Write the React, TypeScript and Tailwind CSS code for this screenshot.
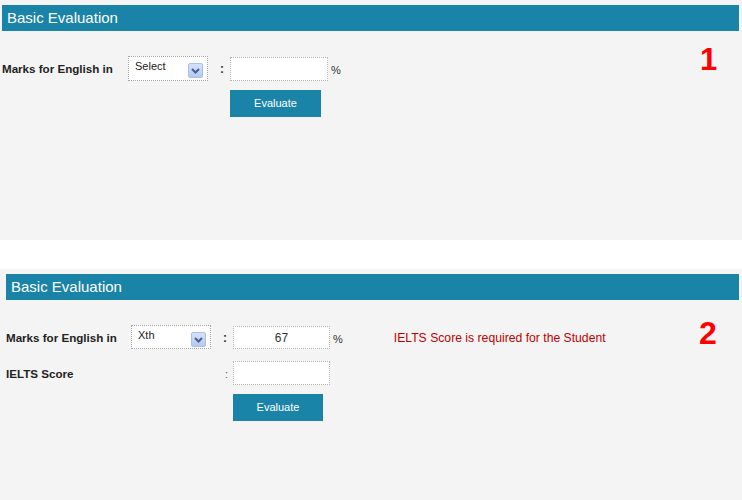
import React from "react";

const font = { fontFamily: '"Liberation Sans", Arial, sans-serif' };

function Arrow() {
  return (
    <span className="flex h-[15px] w-[15px] items-center justify-center rounded-[2px] border border-[#a9c0ec] bg-gradient-to-b from-[#d5e2fb] to-[#b3c9f3]">
      <svg width="9" height="6" viewBox="0 0 9 6">
        <path d="M1 1 L4.5 4.5 L8 1" fill="none" stroke="#4a5f8a" strokeWidth="2" />
      </svg>
    </span>
  );
}

function SelectBox({ label, pad }: { label: string; pad: string }) {
  return (
    <div className={`flex w-[80px] items-start justify-between border border-dotted border-[#a8a8a8] bg-white pl-[6px] pr-[4px] ${pad}`}>
      <span className="pt-[3px] text-[11px] leading-[13px] text-[#222]">{label}</span>
      <span className="pt-[6px]">
        <Arrow />
      </span>
    </div>
  );
}

function Header({ ml }: { ml: string }) {
  return (
    <div className={`${ml} flex h-[26px] items-center bg-[#1a83a8] pl-[5px] pt-[1px] text-[15px] text-white`}>
      Basic Evaluation
    </div>
  );
}

export default function App() {
  return (
    <div style={font} className="w-[742px] bg-white">
      {/* Section 1 */}
      <div className="relative h-[240px] bg-[#f4f4f4] pt-[5px]">
        <div className="w-[739px]">
          <Header ml="ml-[2px]" />
        </div>
        <div className="mt-[25px] flex h-[25px] items-stretch">
          <div className="flex w-[128px] items-center pl-[2px] pt-[1px] text-[11.6px] font-bold text-[#222]">
            Marks for English in
          </div>
          <SelectBox label="Select" pad="h-[25px]" />
          <div className="flex w-[22px] items-center pl-[12px] pt-[1px] text-[12px] font-bold text-[#333]">:</div>
          <div className="mt-[1px] h-[24px] w-[98px] border border-dotted border-[#b5b5b5] bg-white" />
          <div className="flex items-center pl-[3px] pt-[3px] text-[11px] text-[#333]">%</div>
        </div>
        <div className="ml-[230px] mt-[9px] flex h-[27px] w-[91px] items-center justify-center bg-[#1a83a8] text-[11px] text-white">
          Evaluate
        </div>
        <div className="absolute left-[700px] top-[44px] text-[31px] font-bold leading-none text-[#ff0000]">1</div>
      </div>

      {/* white gap */}
      <div className="h-[29px] bg-white" />

      {/* Section 2 */}
      <div className="relative h-[231px] bg-[#f4f4f4] pt-[5px]">
        <div className="w-[739px]">
          <Header ml="ml-[6px]" />
        </div>
        <div className="mt-[25px] flex h-[24px] items-stretch">
          <div className="flex w-[131px] items-center pl-[6px] pt-[2px] text-[11.6px] font-bold text-[#222]">
            Marks for English in
          </div>
          <SelectBox label="Xth" pad="h-[24px]" />
          <div className="flex w-[22px] items-center pl-[12px] pt-[2px] text-[12px] font-bold text-[#333]">:</div>
          <div className="mt-[1px] flex h-[23px] w-[97px] items-center justify-center border border-dotted border-[#b5b5b5] bg-white pt-[1px] text-[12px] text-[#333]">
            67
          </div>
          <div className="flex items-center pl-[3px] pt-[4px] text-[11px] text-[#333]">%</div>
          <div className="ml-[51px] flex items-center pt-[2px] text-[12.2px] text-[#c00000]">
            IELTS Score is required for the Student
          </div>
        </div>
        <div className="mt-[12px] flex h-[24px] items-stretch">
          <div className="flex w-[220px] items-center pl-[6px] pt-[1px] text-[11.6px] font-bold text-[#222]">
            IELTS Score
          </div>
          <div className="flex w-[13px] items-center pl-[5px] pt-[2px] text-[11px] text-[#555]">:</div>
          <div className="h-[24px] w-[97px] border border-dotted border-[#b5b5b5] bg-white" />
        </div>
        <div className="ml-[233px] mt-[9px] flex h-[27px] w-[90px] items-center justify-center bg-[#1a83a8] text-[11px] text-white">
          Evaluate
        </div>
        <div className="absolute left-[699px] top-[48px] text-[32px] font-bold leading-none text-[#ff0000]">2</div>
      </div>
    </div>
  );
}
